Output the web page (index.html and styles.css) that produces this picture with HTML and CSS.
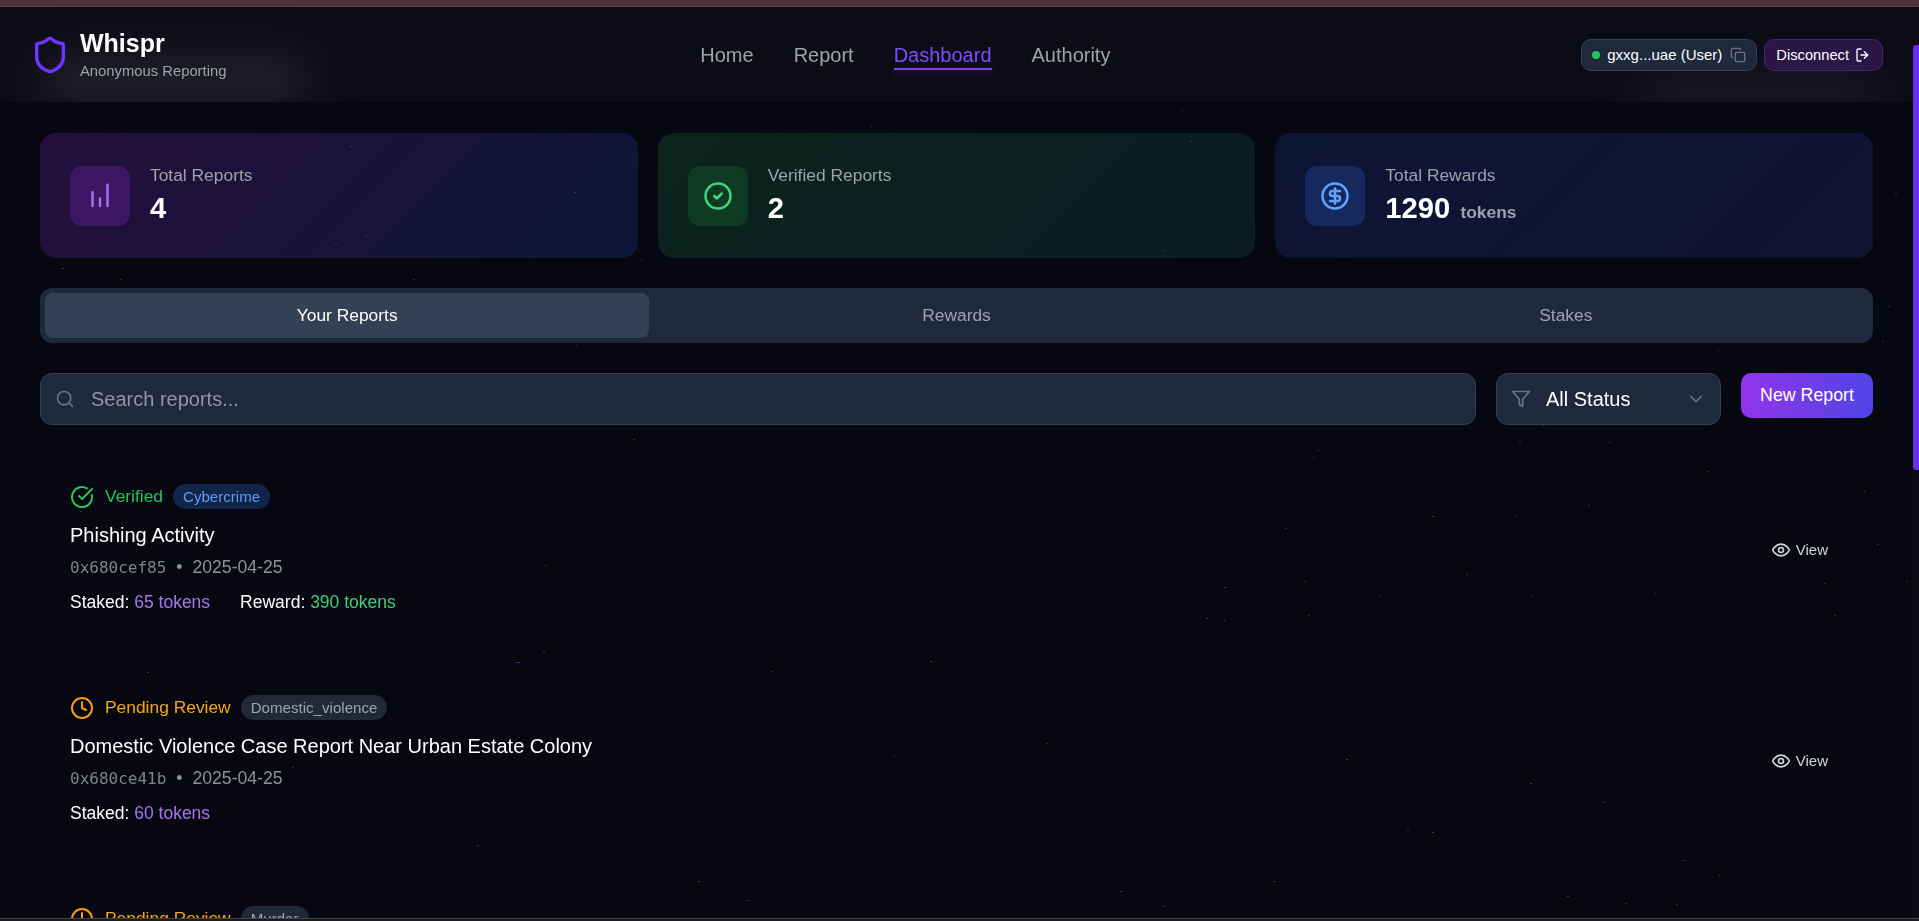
FILE: index.html
```html
<!DOCTYPE html>
<html lang="en">
<head>
    <meta charset="UTF-8">
    <meta name="viewport" content="width=device-width, initial-scale=1.0">
    <title>Whispr - Dashboard</title>
    <link rel="stylesheet" href="styles.css">
</head>
<body>
    <div class="stars"></div>
    <div class="stars stars-purple"></div>
    <div class="top-strip"></div>
    <div class="window">
        <div class="page">
            <header class="header">
                <div class="glow glow-left"></div>
                <div class="glow glow-right"></div>
                <div class="brand">
                    <svg class="icon brand-icon" viewBox="0 0 24 24"><path d="M20 13c0 5-3.5 7.5-7.66 8.95a1 1 0 0 1-.67-.01C7.5 20.5 4 18 4 13V6a1 1 0 0 1 1-1c2 0 4.5-1.2 6.24-2.72a1.17 1.17 0 0 1 1.52 0C14.51 3.81 17 5 19 5a1 1 0 0 1 1 1z"/></svg>
                    <div>
                        <div class="brand-name">Whispr</div>
                        <div class="brand-sub">Anonymous Reporting</div>
                    </div>
                </div>
                <nav class="nav">
                    <a class="nav-link">Home</a>
                    <a class="nav-link">Report</a>
                    <a class="nav-link active">Dashboard</a>
                    <a class="nav-link">Authority</a>
                </nav>
                <div class="account">
                    <div class="wallet">
                        <span class="wallet-dot"></span>
                        <span>gxxg...uae (User)</span>
                        <svg class="icon icon-copy" viewBox="0 0 24 24"><rect x="8" y="8" width="14" height="14" rx="2"/><path d="M4 16c-1.1 0-2-.9-2-2V4c0-1.1.9-2 2-2h10c1.1 0 2 .9 2 2"/></svg>
                    </div>
                    <button class="disconnect">
                        Disconnect
                        <svg class="icon icon-logout" viewBox="0 0 24 24"><path d="M9 21H5a2 2 0 0 1-2-2V5a2 2 0 0 1 2-2h4"/><path d="m14 17 5-5-5-5"/><path d="M19 12H9"/></svg>
                    </button>
                </div>
            </header>

            <main class="main">
                <section class="stats">
                    <div class="stat stat-purple">
                        <div class="stat-icon">
                            <svg class="icon" viewBox="0 0 24 24"><path d="M6 20V9"/><path d="M12 20v-6"/><path d="M18 20V3"/></svg>
                        </div>
                        <div>
                            <div class="stat-label">Total Reports</div>
                            <div class="stat-value">4</div>
                        </div>
                    </div>
                    <div class="stat stat-green">
                        <div class="stat-icon">
                            <svg class="icon" viewBox="0 0 24 24"><circle cx="12" cy="12" r="10"/><path d="m9 12 2 2 4-4"/></svg>
                        </div>
                        <div>
                            <div class="stat-label">Verified Reports</div>
                            <div class="stat-value">2</div>
                        </div>
                    </div>
                    <div class="stat stat-blue">
                        <div class="stat-icon">
                            <svg class="icon" viewBox="0 0 24 24"><circle cx="12" cy="12" r="10"/><path d="M16 8h-6a2 2 0 1 0 0 4h4a2 2 0 1 1 0 4H8"/><path d="M12 18V6"/></svg>
                        </div>
                        <div>
                            <div class="stat-label">Total Rewards</div>
                            <div class="stat-value">1290 <span class="stat-unit">tokens</span></div>
                        </div>
                    </div>
                </section>

                <div class="tabs">
                    <button class="tab active">Your Reports</button>
                    <button class="tab">Rewards</button>
                    <button class="tab">Stakes</button>
                </div>

                <div class="toolbar">
                    <div class="field search">
                        <svg class="icon field-icon" viewBox="0 0 24 24"><circle cx="11" cy="11" r="8"/><path d="m21 21-4.3-4.3"/></svg>
                        <span class="search-text">Search reports...</span>
                    </div>
                    <div class="field status-filter">
                        <svg class="icon field-icon" viewBox="0 0 24 24"><polygon points="22 3 2 3 10 12.46 10 19 14 21 14 12.46 22 3"/></svg>
                        <span class="filter-text">All Status</span>
                        <svg class="icon field-icon chevron" viewBox="0 0 24 24"><path d="m6 9 6 6 6-6"/></svg>
                    </div>
                    <button class="new-report">New Report</button>
                </div>

                <section class="reports">
                    <article class="report">
                        <div class="report-body">
                            <div class="report-status verified">
                                <svg class="icon status-icon" viewBox="0 0 24 24"><path d="M21.801 10A10 10 0 1 1 17 3.335"/><path d="m9 11 3 3L22 4"/></svg>
                                <span>Verified</span>
                                <span class="tag tag-blue">Cybercrime</span>
                            </div>
                            <h3 class="report-title">Phishing Activity</h3>
                            <div class="report-meta"><span class="mono">0x680cef85</span><span class="dot">•</span>2025-04-25</div>
                            <div class="report-tokens">
                                <span>Staked: <span class="staked">65 tokens</span></span>
                                <span>Reward: <span class="reward">390 tokens</span></span>
                            </div>
                        </div>
                        <a class="view">
                            <svg class="icon" viewBox="0 0 24 24"><path d="M2 12s3-7 10-7 10 7 10 7-3 7-10 7-10-7-10-7Z"/><circle cx="12" cy="12" r="3"/></svg>
                            View
                        </a>
                    </article>

                    <article class="report">
                        <div class="report-body">
                            <div class="report-status pending">
                                <svg class="icon status-icon" viewBox="0 0 24 24"><circle cx="12" cy="12" r="10"/><path d="M12 6v6l4 2"/></svg>
                                <span>Pending Review</span>
                                <span class="tag">Domestic_violence</span>
                            </div>
                            <h3 class="report-title">Domestic Violence Case Report Near Urban Estate Colony</h3>
                            <div class="report-meta"><span class="mono">0x680ce41b</span><span class="dot">•</span>2025-04-25</div>
                            <div class="report-tokens">
                                <span>Staked: <span class="staked">60 tokens</span></span>
                            </div>
                        </div>
                        <a class="view">
                            <svg class="icon" viewBox="0 0 24 24"><path d="M2 12s3-7 10-7 10 7 10 7-3 7-10 7-10-7-10-7Z"/><circle cx="12" cy="12" r="3"/></svg>
                            View
                        </a>
                    </article>

                    <article class="report">
                        <div class="report-body">
                            <div class="report-status pending">
                                <svg class="icon status-icon" viewBox="0 0 24 24"><circle cx="12" cy="12" r="10"/><path d="M12 6v6l4 2"/></svg>
                                <span>Pending Review</span>
                                <span class="tag">Murder</span>
                            </div>
                        </div>
                    </article>
                </section>
            </main>
        </div>
        <div class="scrollbar"><div class="scrollbar-thumb"></div></div>
    </div>
    <div class="bottom-strip"></div>
</body>
</html>
```

FILE: styles.css
```css
* {
    box-sizing: border-box;
}
html, body {
    height: 100%;
}
body {
    font-family: "Liberation Sans", Arial, sans-serif;
    margin: 0;
    display: flex;
    flex-direction: column;
    overflow: hidden;
    background: #060711;
    color: #fff;
}
button {
    font-family: inherit;
    border: none;
    color: inherit;
}
.icon {
    display: block;
    flex: none;
    fill: none;
    stroke: currentColor;
    stroke-width: 2;
    stroke-linecap: round;
    stroke-linejoin: round;
}

/* background stars, each shadow is one star */
.stars {
    position: fixed;
    top: 0;
    left: 0;
    width: 2px;
    height: 1px;
    color: #1c2f78;
    box-shadow:
        870px 126px, 1181px 110px, 1190px 141px, 641px 259px, 1163px 250px,
        1895px 193px, 120px 279px, 413px 279px, 576px 345px, 633px 439px,
        80px 511px, 545px 565px, 1888px 306px, 1882px 341px, 1717px 350px,
        1542px 425px, 1519px 441px, 1609px 442px, 1317px 450px, 1313px 457px,
        1707px 471px, 1864px 491px, 1588px 505px, 1515px 515px, 1285px 528px,
        1877px 544px, 1466px 574px, 1304px 581px, 1824px 583px, 1654px 593px,
        1906px 581px, 1379px 596px, 1531px 595px, 1308px 615px, 1834px 615px,
        518px 662px, 292px 767px, 1625px 903px, 1676px 904px, 1718px 875px,
        1224px 620px, 771px 671px, 893px 756px, 1046px 743px, 1407px 830px;
}
.stars-purple {
    color: #3a2a9a;
    box-shadow:
        350px 146px, 574px 192px, 365px 236px, 335px 243px, 62px 268px,
        147px 672px, 1567px 896px, 930px 661px, 1683px 860px, 1432px 832px,
        1603px 802px, 1120px 891px, 1163px 906px, 1273px 881px, 747px 900px,
        477px 845px, 1530px 783px, 1346px 759px, 1224px 587px, 1206px 618px,
        698px 881px, 516px 662px, 543px 651px, 1432px 516px;
}

.top-strip {
    flex: none;
    height: 7px;
    background: #50343c;
    border-bottom: 1px solid #5e4148;
}
.bottom-strip {
    flex: none;
    height: 3px;
    background: #1b1b1f;
    border-top: 1px solid #444;
}
.window {
    flex: 1;
    min-height: 0;
    display: flex;
    position: relative;
    z-index: 1;
}
.page {
    flex: 1;
    min-width: 0;
    overflow: hidden;
}
.scrollbar {
    flex: none;
    width: 6px;
    padding-top: 38px;
    background: #0a0b14;
}
.scrollbar-thumb {
    height: 425px;
    background: #6a2cf5;
    border-radius: 3px 0 0 3px;
}

/* header */
.header {
    height: 95px;
    padding: 0 30px;
    display: flex;
    align-items: center;
    justify-content: space-between;
    position: relative;
    overflow: hidden;
    background: #0b0c16;
}
.glow {
    position: absolute;
    height: 44px;
    background: #23232c;
    filter: blur(22px);
    border-radius: 22px;
}
.glow-left {
    left: 40px;
    top: 50px;
    width: 270px;
}
.glow-right {
    left: 1640px;
    top: 68px;
    width: 240px;
    height: 36px;
    opacity: 0.7;
}
.brand {
    display: flex;
    align-items: center;
    gap: 10px;
    position: relative;
}
.brand-icon {
    width: 40px;
    height: 40px;
    color: #6d35ff;
}
.brand-name {
    font-size: 25px;
    line-height: 30px;
    font-weight: 700;
}
.brand-sub {
    font-size: 14.8px;
    line-height: 20px;
    margin-top: 3px;
    color: #9ca3af;
}
.nav {
    display: flex;
    gap: 40px;
    position: relative;
    margin-left: 3px;
}
.nav-link {
    font-size: 20px;
    line-height: 24px;
    color: #9ca3af;
    position: relative;
}
.nav-link.active {
    color: #7c4dff;
}
.nav-link.active::after {
    content: "";
    position: absolute;
    left: 0;
    right: 0;
    bottom: -3px;
    height: 2px;
    background: #7a3ff0;
    box-shadow: 0 2px 8px rgba(124, 58, 237, 0.5);
}
.account {
    display: flex;
    gap: 7px;
    position: relative;
}
.wallet, .disconnect {
    height: 32px;
    display: flex;
    align-items: center;
    border-radius: 10px;
}
.wallet {
    padding: 0 10px;
    gap: 7px;
    font-size: 15px;
    background: #1e293b;
    border: 1px solid #334155;
}
.wallet-dot {
    width: 8px;
    height: 8px;
    border-radius: 50%;
    background: #22c55e;
}
.icon-copy {
    width: 16px;
    height: 16px;
    margin-left: 1px;
    color: #6b7280;
}
.disconnect {
    padding: 0 11px;
    gap: 6px;
    font-size: 14.7px;
    background: #2a1745;
    border: 1px solid #4a1d7a;
}
.icon-logout {
    width: 16px;
    height: 16px;
}

/* main */
.main {
    padding: 31px 40px 0;
}
.stats {
    display: grid;
    grid-template-columns: repeat(3, 1fr);
    gap: 20px;
    margin-bottom: 30px;
}
.stat {
    height: 125px;
    padding: 0 30px;
    display: flex;
    align-items: center;
    gap: 20px;
    border-radius: 16px;
}
.stat-purple {
    background: linear-gradient(135deg, rgba(88, 28, 135, 0.38), rgba(30, 58, 138, 0.3));
}
.stat-green {
    background: linear-gradient(135deg, rgba(20, 83, 45, 0.38), rgba(19, 78, 74, 0.3));
}
.stat-blue {
    background: linear-gradient(135deg, rgba(30, 58, 138, 0.3), rgba(49, 46, 129, 0.3));
}
.stat-icon {
    width: 60px;
    height: 60px;
    border-radius: 12px;
    display: flex;
    align-items: center;
    justify-content: center;
}
.stat-icon .icon {
    width: 30px;
    height: 30px;
}
.stat-purple .stat-icon {
    background: #3b1764;
    color: #a86ef0;
}
.stat-green .stat-icon {
    background: #0f3a22;
    color: #3fd47d;
}
.stat-blue .stat-icon {
    background: #16295e;
    color: #60a5fa;
}
.stat-label {
    font-size: 17.4px;
    line-height: 20px;
    color: #9ca3af;
}
.stat-value {
    font-size: 29.2px;
    line-height: 36px;
    height: 36px;
    font-weight: 700;
    margin: 5px 0 1px;
}
.stat-unit {
    font-size: 17.4px;
    line-height: 1;
    color: #9ca3af;
    margin-left: 2px;
}

/* tabs */
.tabs {
    display: grid;
    grid-template-columns: repeat(3, 1fr);
    gap: 5px;
    padding: 5px;
    margin-bottom: 30px;
    background: #1e293b;
    border-radius: 12px;
}
.tab {
    height: 45px;
    font-size: 17.4px;
    background: none;
    border-radius: 8px;
    color: #9ca3af;
}
.tab.active {
    background: #334155;
    color: #fff;
}

/* search and filter */
.toolbar {
    display: flex;
    align-items: flex-start;
    gap: 20px;
    margin-bottom: 29px;
}
.field {
    height: 52px;
    display: flex;
    align-items: center;
    background: #1e293b;
    border: 1px solid #334155;
    border-radius: 12px;
}
.field-icon {
    width: 20px;
    height: 20px;
    color: #6b7280;
}
.search {
    flex: 1;
    padding-left: 14px;
    gap: 16px;
}
.search-text {
    font-size: 20px;
    color: #8f96a3;
}
.status-filter {
    flex: none;
    width: 225px;
    padding: 0 14px;
    gap: 15px;
}
.filter-text {
    flex: 1;
    font-size: 20px;
}
.new-report {
    flex: none;
    width: 132px;
    height: 45px;
    font-size: 17.8px;
    border-radius: 10px;
    background: linear-gradient(90deg, #9333ea, #4f46e5);
}

/* reports */
.report {
    padding: 30px;
    margin-bottom: 20px;
    display: flex;
    align-items: center;
    justify-content: space-between;
}
.report-status {
    display: flex;
    align-items: center;
    height: 25px;
    font-size: 17.4px;
    gap: 10px;
}
.status-icon {
    width: 24px;
    height: 24px;
    margin-right: 1px;
}
.verified {
    color: #22c55e;
}
.pending {
    color: #f5a90f;
}
.pending .status-icon {
    color: #f59e0b;
}
.tag {
    height: 25px;
    line-height: 25px;
    padding: 0 10px;
    font-size: 15.1px;
    border-radius: 13px;
    background: #1f2937;
    color: #9ca3af;
}
.tag-blue {
    background: #122449;
    color: #5b9cf6;
}
.report-title {
    margin: 11px 0 0;
    font-size: 20px;
    line-height: 30px;
    font-weight: 400;
}
.report-meta {
    margin-top: 5px;
    font-size: 17.6px;
    line-height: 24px;
    color: #8b92a0;
}
.mono {
    font-family: "DejaVu Sans Mono", monospace;
    font-size: 16px;
    color: #7d8490;
}
.dot {
    margin: 0 10px;
}
.report-tokens {
    display: flex;
    gap: 30px;
    margin-top: 10px;
    font-size: 17.5px;
    line-height: 25px;
}
.staked {
    color: #a974ee;
}
.reward {
    color: #3fcf75;
}
.view {
    display: flex;
    align-items: center;
    gap: 5px;
    padding-right: 15px;
    font-size: 15px;
    color: #d1d5db;
}
.view .icon {
    width: 20px;
    height: 20px;
}
```
